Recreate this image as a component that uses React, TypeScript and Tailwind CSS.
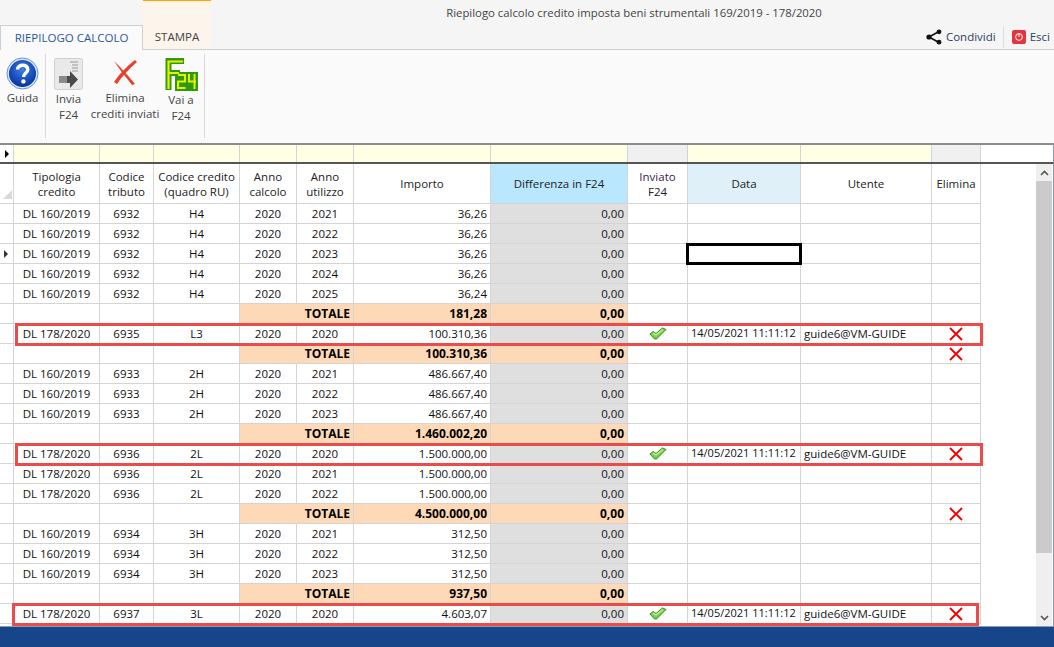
const F = { fontFamily: '"Open Sans", "Noto Sans", sans-serif' };

type R = { k: "d" | "t"; t?: string; c?: string; q?: string; a?: string; i: string; sent?: boolean; x?: boolean };
const d = (t: string, c: string, q: string, a: string, i: string, sent = false): R => ({ k: "d", t, c, q, a, i, sent, x: sent });
const tot = (i: string, x = false): R => ({ k: "t", i, x });

const rows: R[] = [
  d("DL 160/2019", "6932", "H4", "2021", "36,26"),
  d("DL 160/2019", "6932", "H4", "2022", "36,26"),
  d("DL 160/2019", "6932", "H4", "2023", "36,26"),
  d("DL 160/2019", "6932", "H4", "2024", "36,26"),
  d("DL 160/2019", "6932", "H4", "2025", "36,24"),
  tot("181,28"),
  d("DL 178/2020", "6935", "L3", "2020", "100.310,36", true),
  tot("100.310,36", true),
  d("DL 160/2019", "6933", "2H", "2021", "486.667,40"),
  d("DL 160/2019", "6933", "2H", "2022", "486.667,40"),
  d("DL 160/2019", "6933", "2H", "2023", "486.667,40"),
  tot("1.460.002,20"),
  d("DL 178/2020", "6936", "2L", "2020", "1.500.000,00", true),
  d("DL 178/2020", "6936", "2L", "2021", "1.500.000,00"),
  d("DL 178/2020", "6936", "2L", "2022", "1.500.000,00"),
  tot("4.500.000,00", true),
  d("DL 160/2019", "6934", "3H", "2021", "312,50"),
  d("DL 160/2019", "6934", "3H", "2022", "312,50"),
  d("DL 160/2019", "6934", "3H", "2023", "312,50"),
  tot("937,50"),
  d("DL 178/2020", "6937", "3L", "2020", "4.603,07", true),
];

const GRID = "grid grid-cols-[14px_86px_54px_86px_57px_57px_137px_137px_60px_113px_131px_49px]";
const cell = "border-r border-b border-[#d4d4d4] h-5 flex items-center text-[11.5px] text-[#111] overflow-hidden whitespace-nowrap";

function RedX({ size = 16 }: { size?: number }) {
  return (
    <svg width={size} height={size} viewBox="0 0 16 16">
      <path d="M2 2 L14 14 M14 2 L2 14" stroke="#f00000" strokeWidth="1.8" />
    </svg>
  );
}

function Check() {
  return (
    <svg width="18" height="13" viewBox="0 0 18 13">
      <path d="M1 7 L4 4.5 L7 6.5 L13.5 1 L17 2.5 L7.5 12 L5.5 12 Z" fill="#79cf45" stroke="#3b8a28" strokeWidth="1" strokeLinejoin="round" />
      <path d="M4 6 L7 8 L14 2.5" fill="none" stroke="#c9f2a8" strokeWidth="1.2" />
    </svg>
  );
}

function HelpIcon() {
  return (
    <svg width="33" height="33" viewBox="0 0 33 33">
      <defs>
        <radialGradient id="hb" cx="50%" cy="35%" r="70%">
          <stop offset="0%" stopColor="#3f7fe0" />
          <stop offset="70%" stopColor="#1145b5" />
          <stop offset="100%" stopColor="#0b2f8a" />
        </radialGradient>
      </defs>
      <circle cx="16.5" cy="16.5" r="15.5" fill="#e4eefb" stroke="#5c8fd8" strokeWidth="1" />
      <circle cx="16.5" cy="16.5" r="13.6" fill="url(#hb)" />
      <path d="M11.5 12.5 C11.5 6.8 21.8 6.8 21.8 12.4 C21.8 16.2 17.6 15.8 17.6 20" fill="none" stroke="#fff" strokeWidth="3.4" />
      <circle cx="17.4" cy="24.4" r="2.2" fill="#fff" />
    </svg>
  );
}

function SendIcon() {
  return (
    <svg width="29" height="32" viewBox="0 0 29 32">
      <rect x="0.5" y="0.5" width="28" height="31" rx="2" fill="#e9e9e9" stroke="#d0d0d0" />
      <path d="M16 4h8M18 7h6M18 10h6M18 13h6" stroke="#9a9a9a" strokeWidth="1.2" />
      <path d="M12 18h4v-5l8 8.5-8 8.5v-5h-4z" fill="#4a4a4a" />
      <rect x="5" y="18" width="8" height="7" fill="#8a8a8a" />
    </svg>
  );
}

function BigX() {
  return (
    <svg width="26" height="28" viewBox="0 0 26 28">
      <path d="M2 3 C8 9 14 15 23 26 L20 27 C13 18 7 11 2 3 Z" fill="#e8402c" />
      <path d="M23 2 L25 4 C17 11 10 18 5 26 L2 24 C8 15 15 8 23 2 Z" fill="#e8402c" />
    </svg>
  );
}

function F24Icon() {
  return (
    <svg width="33" height="33" viewBox="0 0 33 33">
      <path d="M3.5 32 V3 H19 M3.5 15 H15" fill="none" stroke="#2f9a10" strokeWidth="6" />
      <rect x="10" y="14" width="23" height="19" fill="#2f9a10" />
      <path d="M3.5 31 V3.5 H18 M3.5 15 H14" fill="none" stroke="#e8f000" strokeWidth="2.2" />
      <path d="M13 17 H20 V23.5 H13 V30 H20.5 M24 16 V23.5 H31 M29.5 16 V31" fill="none" stroke="#e8f000" strokeWidth="2" />
    </svg>
  );
}

function Row({ r }: { r: R }) {
  const t = r.k === "t";
  const orange = t ? "bg-[#fdd9b8]" : "";
  return (
    <>
      <div className="border-r border-b border-[#d4d4d4] h-5 flex items-center justify-center bg-white" />
      <div className={`${cell} justify-center`}>{r.t}</div>
      <div className={`${cell} justify-center`}>{r.c}</div>
      <div className={`${cell} justify-center`}>{r.q}</div>
      <div className={`${cell} justify-center ${orange} ${t ? "border-r-[#fdd9b8]" : ""}`}>{t ? "" : "2020"}</div>
      <div className={`${cell} ${t ? "justify-end pr-[3px] font-bold text-[12px] text-black" : "justify-center"} ${orange}`}>{t ? "TOTALE" : r.a}</div>
      <div className={`${cell} justify-end pr-[3px] ${orange} ${t ? "font-bold text-[12px] text-black" : ""}`}>{r.i}</div>
      <div className={`${cell} justify-end pr-[3px] ${t ? "bg-[#fdd9b8] font-bold text-[12px] text-black" : "bg-[#dfdfdf]"}`}>0,00</div>
      <div className={`${cell} justify-center`}>{r.sent && <Check />}</div>
      <div className={`${cell} pl-[3px] text-[11px]`}>{r.sent ? "14/05/2021 11:11:12" : ""}</div>
      <div className={`${cell} pl-[3px]`}>{r.sent ? "guide6@VM-GUIDE" : ""}</div>
      <div className={`${cell} justify-center`}>{r.x && <RedX />}</div>
    </>
  );
}

function Head({ children, bg = "bg-white" }: { children?: React.ReactNode; bg?: string }) {
  return (
    <div className={`border-r border-b border-[#d4d4d4] h-10 flex flex-col items-center justify-center text-center text-[11.5px] leading-[15px] text-[#222] ${bg}`}>
      {children}
    </div>
  );
}

const ribbonLabel = "text-[11.5px] leading-4 text-[#444] text-center whitespace-nowrap";

export default function App() {
  return (
    <div className="w-[1054px] h-[647px] overflow-hidden bg-white flex flex-col relative" style={F}>
      {/* title + tabs */}
      <div className="h-[50px] bg-[#f5f5f5] border-b border-[#cfcfcf] relative shrink-0">
        <div className="h-[25px] flex items-center justify-center text-[11.35px] text-[#444] pl-[214px]">
          Riepilogo calcolo credito imposta beni strumentali 169/2019 - 178/2020
        </div>
        <div className="absolute left-[143px] top-0 w-[68px] h-[49px] bg-[#fdf5ec] border-t border-[#ffa500] flex items-end justify-center pb-[4px] text-[11.5px] text-[#444]">
          STAMPA
        </div>
        <div className="absolute left-0 top-[25px] w-[143px] h-[25px] bg-[#fafafa] border-t border-x border-[#cfcfcf] flex items-center justify-center text-[11.5px] text-[#2b579a]">
          RIEPILOGO CALCOLO
        </div>
        <div className="absolute right-0 top-[25px] h-[24px] flex items-center">
          <svg width="16" height="16" viewBox="0 0 16 16" className="mr-[4px]">
            <path d="M13 2.5 L3 8 L13 13.5" fill="none" stroke="#111" strokeWidth="1.6" />
            <circle cx="13" cy="2.8" r="2.4" fill="#111" /><circle cx="3" cy="8" r="2.6" fill="#111" /><circle cx="13" cy="13.2" r="2.4" fill="#111" />
          </svg>
          <span className="text-[11.5px] text-[#2b3f66] pr-[7px] border-r border-[#dcdcdc] h-[22px] leading-[22px]">Condividi</span>
          <span className="ml-[8px] mr-[4px] w-[14px] h-[14px] bg-[#e8323c] rounded-[2px] flex items-center justify-center">
            <svg width="10" height="10" viewBox="0 0 10 10"><circle cx="5" cy="5" r="3.4" fill="none" stroke="#fff" strokeWidth="1" /><path d="M5 1v4" stroke="#fff" /></svg>
          </span>
          <span className="text-[11.5px] text-[#2b3f66] pr-[4px]">Esci</span>
        </div>
      </div>

      {/* ribbon */}
      <div className="h-[93px] bg-[#fafafa] flex items-start shrink-0 pt-[4px]">
        <div className="w-[46px] h-[84px] border-r border-[#d8d8d8] flex flex-col items-center pt-[3px]">
          <HelpIcon />
          <div className={ribbonLabel}>Guida</div>
        </div>
        <div className="w-[159px] h-[84px] border-r border-[#d8d8d8] flex pt-[4px]">
          <div className="w-[45px] flex flex-col items-center gap-[1px]"><SendIcon /><div className={ribbonLabel}>Invia<br />F24</div></div>
          <div className="w-[68px] flex flex-col items-center"><BigX /><div className={`${ribbonLabel} mt-[4px]`}>Elimina<br />crediti inviati</div></div>
          <div className="w-[44px] flex flex-col items-center gap-[1px]"><F24Icon /><div className={ribbonLabel}>Vai a<br />F24</div></div>
        </div>
      </div>

      {/* filter row */}
      <div className="h-[21px] border-t-2 border-b-2 border-t-[#8c8c8c] border-b-[#555] border-r border-r-[#8a98ac] flex shrink-0 bg-white">
        <div className={GRID}>
          <div className="border-r border-[#d4d4d4] flex items-center justify-center">
            <svg width="6" height="8" viewBox="0 0 6 8"><path d="M1 0 L5 4 L1 8 Z" fill="#000" /></svg>
          </div>
          {Array.from({ length: 11 }).map((_, i) => (
            <div key={i} className={`border-r border-[#d4d4d4] h-full ${i === 7 || i === 10 ? "bg-[#f0f0f0]" : "bg-[#ffffe3]"}`} />
          ))}
        </div>
      </div>

      {/* table */}
      <div className="flex-1 relative overflow-hidden flex border-r border-[#8a98ac]">
        <div className={`${GRID} content-start`}>
          <div className="border-r border-b border-[#d4d4d4] h-10 bg-white relative">
            <div className="absolute right-[1px] bottom-[4px] w-0 h-0 border-l-[9px] border-b-[9px] border-l-transparent border-b-[#d8d8d8]" />
          </div>
          <Head><span>Tipologia</span><span>credito</span></Head>
          <Head><span>Codice</span><span>tributo</span></Head>
          <Head><span>Codice credito</span><span>(quadro RU)</span></Head>
          <Head><span>Anno</span><span>calcolo</span></Head>
          <Head><span>Anno</span><span>utilizzo</span></Head>
          <Head>Importo</Head>
          <Head bg="bg-[#b9e8fe]">Differenza in F24</Head>
          <Head><span className="text-[#3c1a50]">Inviato</span><span>F24</span></Head>
          <Head bg="bg-[#dff0f9]">Data</Head>
          <Head>Utente</Head>
          <Head>Elimina</Head>
          {rows.map((r, i) => <Row key={i} r={r} />)}
        </div>

        {/* row indicator */}
        <svg width="6" height="8" viewBox="0 0 6 8" className="absolute left-[3px] top-[86px]"><path d="M1 0 L5 4 L1 8 Z" fill="#333" /></svg>
        {/* selected cell */}
        <div className="absolute left-[686px] top-[79px] w-[116px] h-[22px] border-[3px] border-black" />
        {/* red highlights */}
        <div className="absolute left-[15px] top-[159px] w-[968px] h-[23px] border-[3px] border-[#ea4c4c]" />
        <div className="absolute left-[15px] top-[279px] w-[968px] h-[23px] border-[3px] border-[#ea4c4c]" />
        <div className="absolute left-[12px] top-[439px] w-[967px] h-[23px] border-[3px] border-[#ea4c4c]" />

        {/* scrollbar */}
        <div className="absolute right-[1px] top-0 bottom-0 w-[16px] bg-[#efefef] flex flex-col items-center">
          <div className="h-[17px] flex items-center justify-center">
            <svg width="9" height="6" viewBox="0 0 9 6"><path d="M1 5 L4.5 1.5 L8 5" fill="none" stroke="#555" strokeWidth="1.6" /></svg>
          </div>
          <div className="w-full h-[372px] bg-[#cbcbcb]" />
          <div className="flex-1" />
          <div className="h-[17px] flex items-center justify-center">
            <svg width="9" height="6" viewBox="0 0 9 6"><path d="M1 1 L4.5 4.5 L8 1" fill="none" stroke="#555" strokeWidth="1.6" /></svg>
          </div>
        </div>
      </div>

      {/* status bar */}
      <div className="h-[21px] bg-[#17458a] shrink-0 border-t border-[#8a9bb5]" />
    </div>
  );
}
